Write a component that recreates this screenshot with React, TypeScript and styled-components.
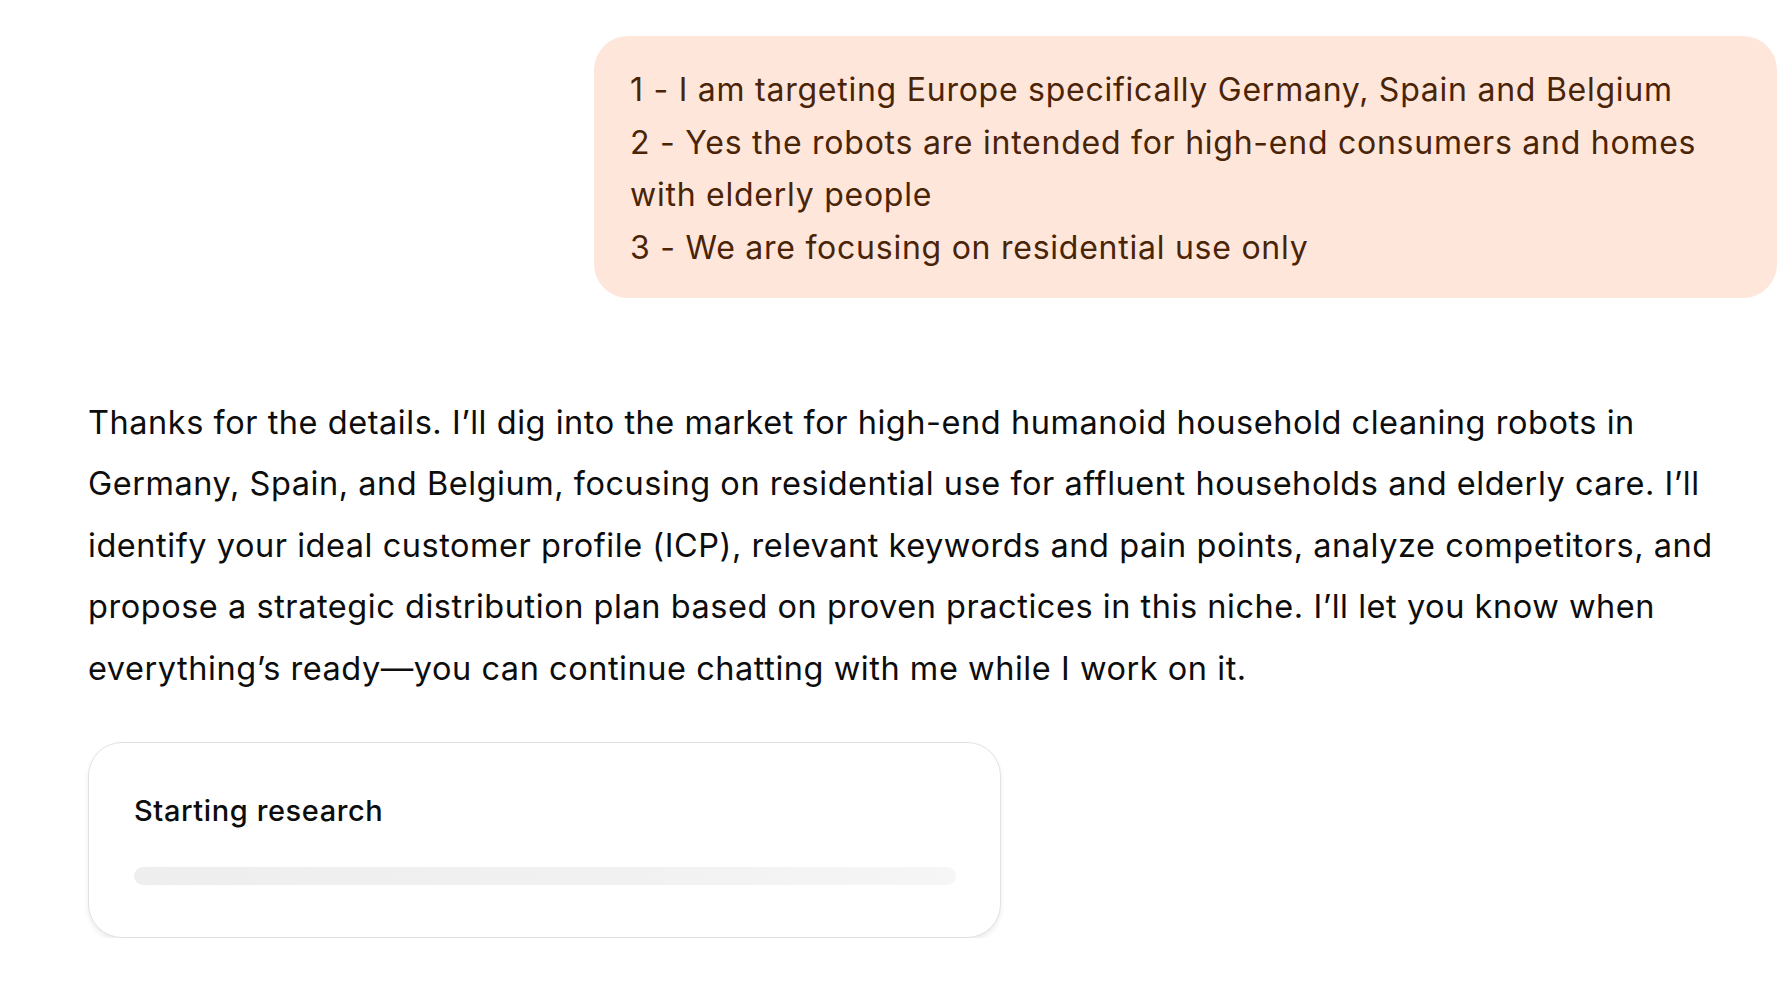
import React from 'react';
import styled, { createGlobalStyle } from 'styled-components';

const GlobalStyle = createGlobalStyle`
  html, body { margin: 0; padding: 0; background: #ffffff; }
  body { font-family: Inter, "Noto Sans", "Liberation Sans", sans-serif; -webkit-font-smoothing: antialiased; }
`;

const Thread = styled.main`
  display: flex;
  flex-direction: column;
  padding: 36px 15px 0 88px;
`;

const UserBubble = styled.div`
  align-self: flex-end;
  width: 1183px;
  box-sizing: border-box;
  padding: 28px 36px 24px 36px;
  background: #fee6da;
  border-radius: 34px;
  color: #4a2407;
  font-size: 32px;
  letter-spacing: 0.75px;
`;

const BubbleLine = styled.div`
  line-height: 52.5px;
`;

const Reply = styled.p`
  margin: 94px 0 0 0;
  max-width: 1640px;
  color: #0d0d0d;
  font-size: 32.5px;
  letter-spacing: 0.54px;
  line-height: 61.4px;
`;

const ResearchCard = styled.section`
  width: 913px;
  height: 196px;
  box-sizing: border-box;
  margin-top: 43px;
  padding: 50px 44px 0 45px;
  border: 1.5px solid #e2e2e2;
  border-radius: 34px;
  background: #ffffff;
  box-shadow: 0 3px 5px rgba(0, 0, 0, 0.08);
`;

const CardTitle = styled.h3`
  margin: 0;
  font-size: 29px;
  font-weight: 500;
  letter-spacing: 0.6px;
  line-height: 36px;
  color: #0d0d0d;
`;

const ProgressTrack = styled.div`
  margin-top: 38px;
  height: 18px;
  border-radius: 9px;
  background: linear-gradient(90deg, #eeeeee 0%, #f1f1f1 60%, #f6f6f6 100%);
`;

const userLines = [
  '1 - I am targeting Europe specifically Germany, Spain and Belgium',
  '2 - Yes the robots are intended for high-end consumers and homes with elderly people',
  '3 - We are focusing on residential use only',
];

export default function App() {
  return (
    <>
      <GlobalStyle />
      <Thread>
        <UserBubble>
          {userLines.map((line, i) => (
            <BubbleLine key={i}>{line}</BubbleLine>
          ))}
        </UserBubble>
        <Reply>
          Thanks for the details. I’ll dig into the market for high-end humanoid household cleaning robots in
          Germany, Spain, and Belgium, focusing on residential use for affluent households and elderly care. I’ll
          identify your ideal customer profile (ICP), relevant keywords and pain points, analyze competitors, and
          propose a strategic distribution plan based on proven practices in this niche. I’ll let you know when
          everything’s ready—you can continue chatting with me while I work on it.
        </Reply>
        <ResearchCard>
          <CardTitle>Starting research</CardTitle>
          <ProgressTrack />
        </ResearchCard>
      </Thread>
    </>
  );
}
